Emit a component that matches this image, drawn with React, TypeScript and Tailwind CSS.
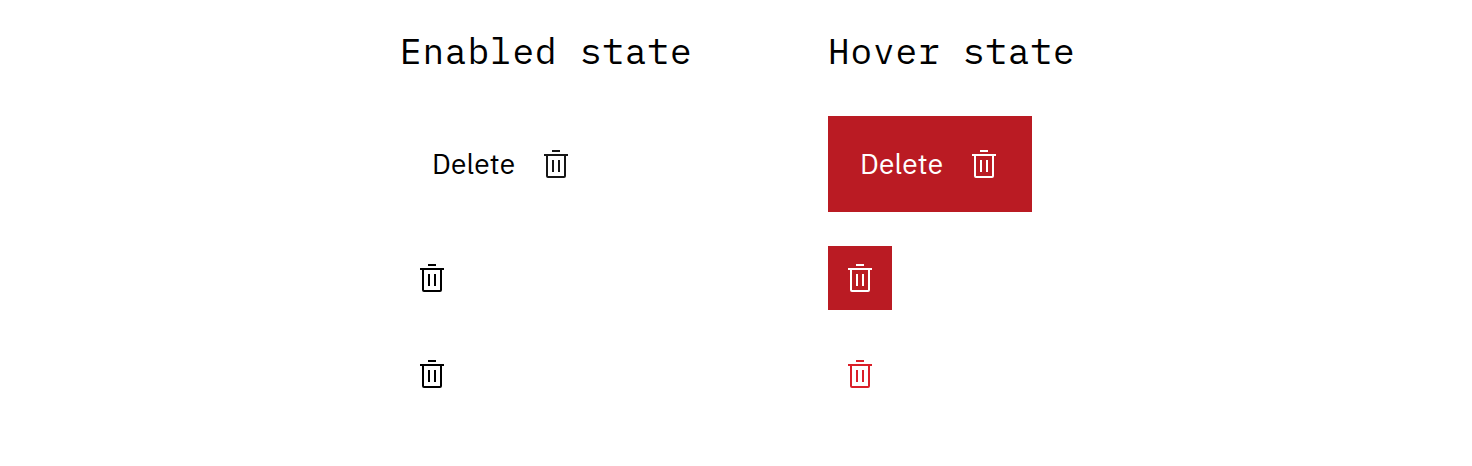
import type { ReactNode } from "react";

function TrashIcon({ className = "" }: { className?: string }) {
  return (
    <svg className={`h-8 w-8 shrink-0 ${className}`} viewBox="0 0 32 32" fill="currentColor" aria-hidden="true">
      <path d="M12 12H14V24H12zM18 12H20V24H18z" />
      <path d="M4 6V8H6V28a2 2 0 0 0 2 2H24a2 2 0 0 0 2-2V8h2V6zM8 28V8H24V28zM12 2H20V4H12z" />
    </svg>
  );
}

function Heading({ children }: { children: ReactNode }) {
  return (
    <h2 className="h-12 whitespace-nowrap font-['IBM_Plex_Mono','DejaVu_Sans_Mono','Liberation_Mono',monospace] text-[36px] leading-[46px] tracking-[0.9px]">
      {children}
    </h2>
  );
}

export default function App() {
  return (
    <main className="flex h-[466px] w-[1472px] bg-white pl-[400px] pt-7 font-['IBM_Plex_Sans',Roboto,sans-serif] text-black antialiased">
      <section className="w-[428px]">
        <Heading>Enabled state</Heading>
        <button className="mt-10 flex h-24 w-[204px] items-center justify-between px-8 text-[28px] tracking-[0.16px]">
          Delete <TrashIcon className="text-[#161616]" />
        </button>
        <button className="mt-[34px] flex h-16 w-16 items-center justify-center"><TrashIcon /></button>
        <button className="mt-8 flex h-16 w-16 items-center justify-center"><TrashIcon /></button>
      </section>
      <section>
        <Heading>Hover state</Heading>
        <button className="mt-10 flex h-24 w-[204px] items-center justify-between bg-[#ba1b23] px-8 text-[28px] tracking-[0.16px] text-white">
          Delete <TrashIcon />
        </button>
        <button className="mt-[34px] flex h-16 w-16 items-center justify-center bg-[#ba1b23] text-white"><TrashIcon /></button>
        <button className="mt-8 flex h-16 w-16 items-center justify-center text-[#da1e28]"><TrashIcon /></button>
      </section>
    </main>
  );
}
